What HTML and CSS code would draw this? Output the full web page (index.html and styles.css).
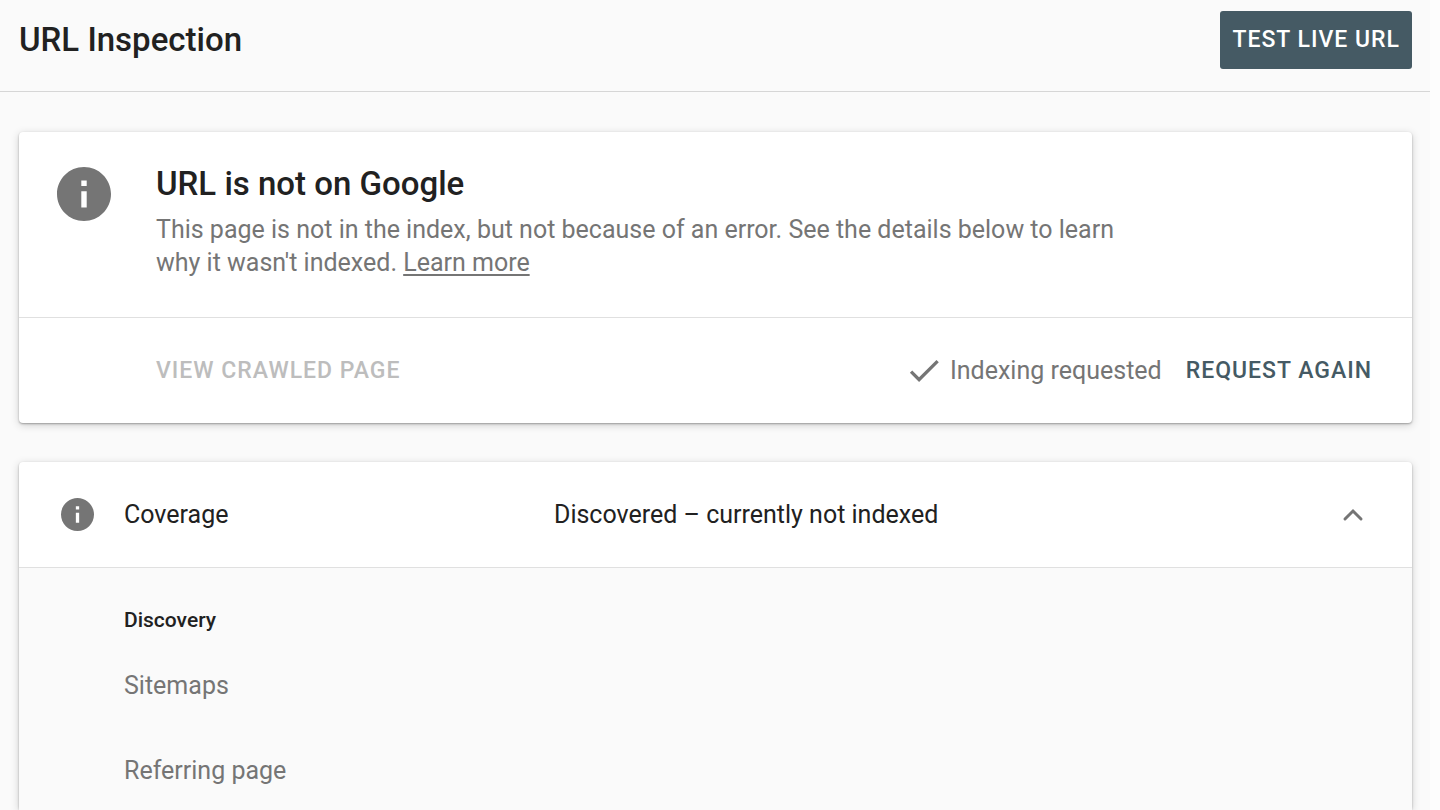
FILE: index.html
```
<!DOCTYPE html>
<html lang="en">
<head>
    <meta charset="UTF-8">
    <meta name="viewport" content="width=device-width, initial-scale=1.0">
    <title>URL Inspection</title>
    <link rel="stylesheet" href="styles.css">
</head>
<body>

    <header class="topbar">
        <h1>URL Inspection</h1>
        <button type="button" class="btn-primary">TEST LIVE URL</button>
    </header>

    <main>
        <section class="card">
            <div class="verdict">
                <svg class="icon-large" viewBox="2 2 20 20" aria-hidden="true">
                    <path d="M12 2C6.48 2 2 6.48 2 12s4.48 10 10 10 10-4.48 10-10S17.52 2 12 2zm1 15h-2v-6h2v6zm0-8h-2V7h2v2z"/>
                </svg>
                <div>
                    <h2>URL is not on Google</h2>
                    <p>This page is not in the index, but not because of an error. See the details below to learn why it wasn't indexed. <a href="#">Learn more</a></p>
                </div>
            </div>
            <div class="actions">
                <button type="button" class="btn-text" disabled>VIEW CRAWLED PAGE</button>
                <div class="request">
                    <svg class="icon-check" viewBox="3 5 18 14" aria-hidden="true">
                        <path d="M9 16.17L4.83 12l-1.42 1.41L9 19 21 7l-1.41-1.41z"/>
                    </svg>
                    <span>Indexing requested</span>
                    <button type="button" class="btn-text">REQUEST AGAIN</button>
                </div>
            </div>
        </section>

        <section class="card">
            <div class="coverage">
                <svg class="icon-small" viewBox="2 2 20 20" aria-hidden="true">
                    <path d="M12 2C6.48 2 2 6.48 2 12s4.48 10 10 10 10-4.48 10-10S17.52 2 12 2zm1 15h-2v-6h2v6zm0-8h-2V7h2v2z"/>
                </svg>
                <span class="name">Coverage</span>
                <span class="status">Discovered – currently not indexed</span>
                <button type="button" class="toggle" aria-label="Collapse" aria-expanded="true">
                    <svg viewBox="0 0 22 16" aria-hidden="true">
                        <path d="M3 12l8-8 8 8"/>
                    </svg>
                </button>
            </div>
            <div class="details">
                <h3>Discovery</h3>
                <p>Sitemaps</p>
                <p>Referring page</p>
            </div>
        </section>
    </main>

</body>
</html>
```
FILE: styles.css
```
* {
    box-sizing: border-box;
}

html {
    background-color: #fdfdfd;
}

body {
    min-height: 100vh;
    margin: 0 10px 0 0;
    font-family: Roboto, sans-serif;
    font-size: 25px;
    line-height: 32px;
    color: #212121;
    background-color: #fafafa;
}

h1, h2, h3, p {
    margin: 0;
}

h1, h2 {
    font-size: 33px;
    line-height: 40px;
    font-weight: 500;
}

button {
    font-family: inherit;
    font-size: 23px;
    line-height: 32px;
    font-weight: 500;
    letter-spacing: 1px;
    border: none;
    cursor: pointer;
}

svg {
    display: block;
    flex-shrink: 0;
    fill: #757575;
}

.topbar {
    display: flex;
    justify-content: space-between;
    align-items: center;
    height: 92px;
    padding: 0 18px 12px 19px;
    border-bottom: 1px solid #d6d6d6;
}

.btn-primary {
    height: 58px;
    padding: 0 12px;
    color: #fff;
    background-color: #455a64;
    border-radius: 3px;
}

main {
    padding: 40px 18px 0 19px;
}

.card {
    background-color: #fff;
    border-radius: 4px;
    box-shadow: 0 1px 2px rgba(0, 0, 0, 0.3), 0 2px 8px rgba(0, 0, 0, 0.18);
}

.card + .card {
    margin-top: 39px;
}

.verdict {
    display: flex;
    gap: 45px;
    padding: 32px 38px 38px;
    border-bottom: 1px solid #e0e0e0;
}

.verdict p {
    max-width: 960px;
    margin-top: 9px;
    line-height: 33px;
    color: #757575;
}

.verdict a {
    color: inherit;
    text-underline-offset: 3px;
}

.icon-large {
    width: 54px;
    height: 54px;
    margin-top: 3px;
}

.actions {
    display: flex;
    justify-content: space-between;
    align-items: center;
    height: 105px;
    padding: 0 40px 0 137px;
}

.btn-text {
    padding: 0;
    color: #455a64;
    background: none;
}

.btn-text:disabled {
    color: #bdbdbd;
    cursor: default;
}

.request {
    display: flex;
    align-items: center;
    color: #757575;
}

.icon-check {
    width: 30px;
    height: 23px;
    margin-right: 11px;
}

.request .btn-text {
    margin-left: 24px;
}

.coverage {
    display: flex;
    align-items: center;
    height: 106px;
    padding: 0 48px 0 42px;
    border-bottom: 1px solid #e0e0e0;
}

.icon-small {
    width: 33px;
    height: 33px;
    margin-right: 30px;
}

.name {
    width: 33%;
}

.status {
    flex: 1;
}

.toggle {
    padding: 0;
    background: none;
}

.toggle svg {
    width: 22px;
    height: 16px;
    fill: none;
    stroke: #757575;
    stroke-width: 3;
    stroke-linecap: round;
}

.details {
    padding: 36px 105px 23px;
    background-color: #fafafa;
}

.details h3 {
    font-size: 21px;
    font-weight: 500;
}

.details p {
    margin-top: 34px;
    color: #757575;
}

.details p + p {
    margin-top: 53px;
}
```
